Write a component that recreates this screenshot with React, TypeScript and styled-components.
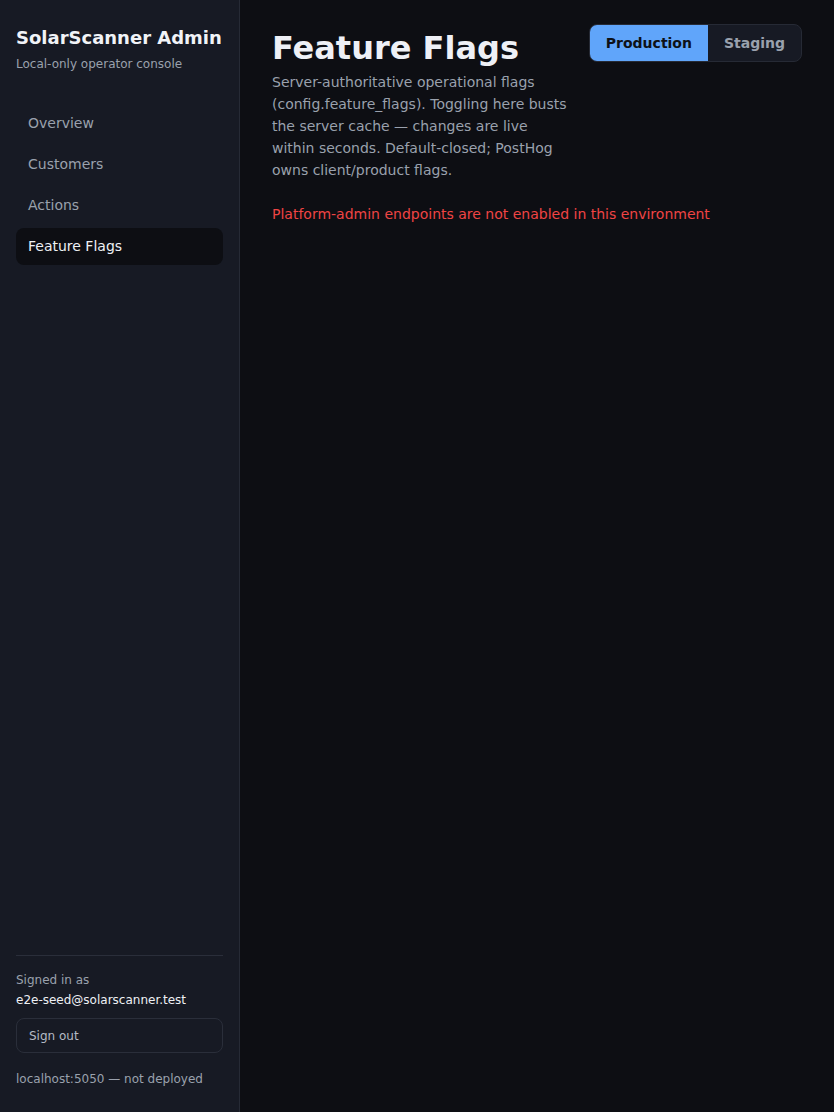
import React, { useState } from "react";
import styled, { createGlobalStyle } from "styled-components";

const GlobalStyle = createGlobalStyle`
  html, body {
    margin: 0;
    padding: 0;
    background: #0d0e13;
  }
  body {
    font-family: "DejaVu Sans", "Noto Sans", sans-serif;
    color: #e5e7eb;
  }
  * { box-sizing: border-box; }
`;

const Shell = styled.div`
  display: flex;
  min-height: 100vh;
  background: #0d0e13;
`;

const Sidebar = styled.aside`
  width: 240px;
  flex-shrink: 0;
  display: flex;
  flex-direction: column;
  padding: 25px 16px 24px;
  background: #171a24;
  border-right: 1px solid #262a35;
  min-height: 100vh;
`;

const Brand = styled.div`
  font-size: 18px;
  font-weight: 700;
  line-height: 1.4;
  color: #f1f3f7;
`;

const BrandSub = styled.div`
  margin-top: 5px;
  font-size: 12px;
  line-height: 18px;
  color: #9aa1ad;
`;

const Nav = styled.nav`
  display: flex;
  flex-direction: column;
  gap: 4px;
  margin-top: 32px;
`;

const NavItem = styled.a<{ $active?: boolean }>`
  display: block;
  padding: 9px 12px;
  font-size: 14px;
  line-height: 19px;
  border-radius: 8px;
  text-decoration: none;
  cursor: pointer;
  color: ${(p) => (p.$active ? "#eef0f4" : "#9aa1ad")};
  background: ${(p) => (p.$active ? "#0d0e13" : "transparent")};
`;

const Footer = styled.div`
  margin-top: auto;
  padding-top: 14px;
  border-top: 1px solid #2a2e3a;
  display: flex;
  flex-direction: column;
`;

const FooterLabel = styled.div`
  font-size: 12px;
  line-height: 20px;
  color: #9aa1ad;
`;

const FooterEmail = styled.div`
  font-size: 12px;
  line-height: 20px;
  color: #eef0f4;
`;

const SignOut = styled.button`
  margin-top: 8px;
  height: 35px;
  padding: 0 12px;
  text-align: left;
  font-family: inherit;
  font-size: 12px;
  color: #b4bac4;
  background: transparent;
  border: 1px solid #2a2e3a;
  border-radius: 8px;
  cursor: pointer;
`;

const EnvNote = styled.div`
  margin-top: 17px;
  font-size: 12px;
  line-height: 18px;
  color: #9aa1ad;
`;

const Main = styled.main`
  flex: 1;
  min-width: 0;
  padding: 24px 32px;
`;

const Header = styled.div`
  display: flex;
  justify-content: space-between;
  align-items: flex-start;
  gap: 16px;
`;

const TitleBlock = styled.div`
  min-width: 0;
`;

const Title = styled.h1`
  margin: 4px 0 0;
  font-size: 32px;
  font-weight: 700;
  line-height: 40px;
  color: #eef0f6;
`;

const Description = styled.p`
  margin: 3px 0 0;
  font-size: 14px;
  line-height: 22px;
  color: #9aa1ad;
`;

const Segmented = styled.div`
  display: flex;
  flex-shrink: 0;
  border: 1px solid #262a35;
  border-radius: 8px;
  overflow: hidden;
  background: #171a24;
`;

const Segment = styled.button<{ $active?: boolean }>`
  height: 36px;
  padding: 0 16px;
  border: none;
  font-family: inherit;
  font-size: 14px;
  font-weight: 700;
  cursor: pointer;
  color: ${(p) => (p.$active ? "#0d1117" : "#9aa1ad")};
  background: ${(p) => (p.$active ? "#60a5fa" : "transparent")};
`;

const ErrorText = styled.div`
  margin-top: 22px;
  font-size: 14px;
  line-height: 22px;
  color: #ef4444;
`;

const navItems = ["Overview", "Customers", "Actions", "Feature Flags"];
const envs = ["Production", "Staging"];

export default function App() {
  const [env, setEnv] = useState("Production");
  return (
    <>
      <GlobalStyle />
      <Shell>
        <Sidebar>
          <Brand>SolarScanner Admin</Brand>
          <BrandSub>Local-only operator console</BrandSub>
          <Nav>
            {navItems.map((item) => (
              <NavItem key={item} $active={item === "Feature Flags"}>
                {item}
              </NavItem>
            ))}
          </Nav>
          <Footer>
            <FooterLabel>Signed in as</FooterLabel>
            <FooterEmail>e2e-seed@solarscanner.test</FooterEmail>
            <SignOut>Sign out</SignOut>
            <EnvNote>localhost:5050 — not deployed</EnvNote>
          </Footer>
        </Sidebar>
        <Main>
          <Header>
            <TitleBlock>
              <Title>Feature Flags</Title>
              <Description>
                Server-authoritative operational flags (config.feature_flags).
                Toggling here busts the server cache — changes are live within
                seconds. Default-closed; PostHog owns client/product flags.
              </Description>
            </TitleBlock>
            <Segmented>
              {envs.map((e) => (
                <Segment key={e} $active={env === e} onClick={() => setEnv(e)}>
                  {e}
                </Segment>
              ))}
            </Segmented>
          </Header>
          <ErrorText>Platform-admin endpoints are not enabled in this environment</ErrorText>
        </Main>
      </Shell>
    </>
  );
}
